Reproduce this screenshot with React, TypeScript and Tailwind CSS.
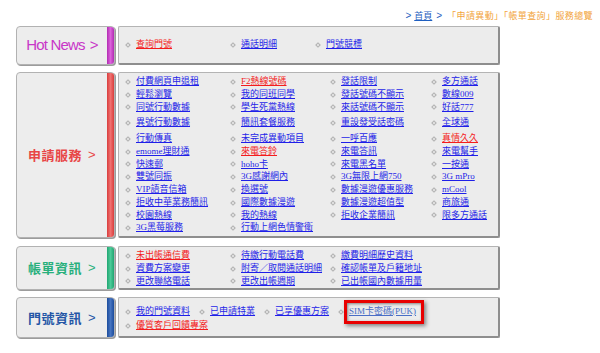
import React from "react";
import clsx from "clsx";

type Item = { text: string; red?: boolean };

const applyRows: Item[][] = [
  [{ text: "付費網頁申退租" }, { text: "F2熱線號碼", red: true }, { text: "發話限制" }, { text: "多方通話" }],
  [{ text: "輕鬆瀏覽" }, { text: "我的同班同學" }, { text: "發話號碼不顯示" }, { text: "數線009" }],
  [{ text: "同號行動數據" }, { text: "學生死黨熱線" }, { text: "來話號碼不顯示" }, { text: "好話777" }],
  [{ text: "異號行動數據" }, { text: "簡訊套餐服務" }, { text: "重設發受話密碼" }, { text: "全球通" }],
  [{ text: "行動傳真" }, { text: "未完成異動項目" }, { text: "一呼百應" }, { text: "真情久久", red: true }],
  [{ text: "emome理財通" }, { text: "來電答鈴", red: true }, { text: "來電答訊" }, { text: "來電幫手" }],
  [{ text: "快速郵" }, { text: "hoho卡" }, { text: "來電黑名單" }, { text: "一按通" }],
  [{ text: "雙號同振" }, { text: "3G感謝網內" }, { text: "3G無限上網750" }, { text: "3G mPro" }],
  [{ text: "VIP語音信箱" }, { text: "換選號" }, { text: "數據漫遊優惠服務" }, { text: "mCool" }],
  [{ text: "拒收中華業務簡訊" }, { text: "國際數據漫遊" }, { text: "數據漫遊超值型" }, { text: "商旅通" }],
  [{ text: "校園熱線" }, { text: "我的熱線" }, { text: "拒收企業簡訊" }, { text: "限多方通話" }],
  [{ text: "3G黑莓服務" }, { text: "行動上網色情警衛" }],
];

const billRows: Item[][] = [
  [{ text: "未出帳通信費", red: true }, { text: "待繳行動電話費" }, { text: "繳費明細歷史資料" }],
  [{ text: "資費方案變更" }, { text: "附寄／取閱通話明細" }, { text: "確認帳單及戶籍地址" }],
  [{ text: "更改聯絡電話" }, { text: "更改出帳週期" }, { text: "已出帳國內數據用量" }],
];

const Bullet = () => (
  <span className="mr-[6px] inline-block h-[4px] w-[4px] shrink-0 rotate-45 border border-[#b0b0b0] bg-[#e4e4e4]" />
);

const Cell = ({ item }: { item?: Item }) =>
  item ? (
    <div className="flex items-center whitespace-nowrap">
      <Bullet />
      <a
        href="#"
        className={clsx(
          "underline underline-offset-1",
          item.red ? "text-[#f41c1c]" : "text-[#1f1fe8]",
        )}
      >
        {item.text}
      </a>
    </div>
  ) : (
    <div />
  );

type SectionProps = {
  label: React.ReactNode;
  labelClass: string;
  barClass: string;
  heightClass: string;
  children: React.ReactNode;
};

const Section = ({ label, labelClass, barClass, heightClass, children }: SectionProps) => (
  <div className={clsx("flex gap-[3px] pl-[16px]", heightClass)}>
    <div className="flex w-[99px] overflow-hidden rounded-[4px] border border-[#b2b2b2] bg-[#ededed] shadow-[1px_1px_0_#9c9c9c]">
      <div className={clsx("flex flex-1 items-center justify-center whitespace-nowrap", labelClass)}>
        {label}
      </div>
      <div className={clsx("w-[7px]", barClass)} />
    </div>
    <div className="w-[382px] rounded-[2px] border border-[#b4b4b4] border-r-2 border-b-2 border-r-[#8e8e8e] border-b-[#8e8e8e] bg-[#ececec] font-['Liberation_Serif','Noto_Sans_CJK_TC',serif] text-[9px]">
      {children}
    </div>
  </div>
);

const Chevron = () => <span className="ml-[6px] font-['Liberation_Sans',sans-serif] font-normal">&gt;</span>;

export default function App() {
  return (
    <div className="h-[353px] w-[600px] bg-white">
      <div className="flex h-[26px] justify-end pr-[7px] pt-[10px] font-['Noto_Sans_CJK_TC',sans-serif] text-[9px] leading-[12px]">
        <span className="mr-[3px] font-['Liberation_Sans',sans-serif] text-[10px] text-[#1f5fc0]">&gt;</span>
        <a href="#" className="text-[#1f5fc0] underline">首頁</a>
        <span className="ml-[4px] mr-[5px] font-['Liberation_Sans',sans-serif] text-[10px] text-[#1f5fc0]">&gt;</span>
        <span className="tracking-[0.4px] text-[#f2a43a]">「申請異動」「帳單查詢」服務總覽</span>
      </div>

      <Section
        label={
          <>
            Hot News<span className="ml-[5px] font-light">&gt;</span>
          </>
        }
        labelClass="font-['Liberation_Sans',sans-serif] text-[15px] tracking-[-0.8px] text-[#c836c8]"
        barClass="bg-linear-to-r from-[#b22ab2] via-[#dc62dc] to-[#b22ab2]"
        heightClass="h-[39px]"
      >
        <div className="grid h-full grid-cols-[105px_85px_1fr] items-center pl-[7px]">
          <Cell item={{ text: "查詢門號", red: true }} />
          <Cell item={{ text: "通話明細" }} />
          <Cell item={{ text: "門號競標" }} />
        </div>
      </Section>

      <div className="mt-[7px]">
        <Section
          label={
            <>
              申請服務<Chevron />
            </>
          }
          labelClass="font-['Noto_Sans_CJK_TC',sans-serif] text-[13px] font-bold tracking-[0.5px] text-[#e84646]"
          barClass="bg-linear-to-r from-[#d83c3c] via-[#f07070] to-[#d83c3c]"
          heightClass="h-[166px]"
        >
          <div className="pl-[7px] pt-[2px]">
            {applyRows.map((row, i) => (
              <div
                key={i}
                className={clsx(
                  "grid h-[12.75px] grid-cols-[105px_100px_101px_1fr] items-center",
                  (i === 3 || i === 4) && "mt-[3px]",
                )}
              >
                {row.map((item) => (
                  <Cell key={item.text} item={item} />
                ))}
              </div>
            ))}
          </div>
        </Section>
      </div>

      <div className="mt-[8px]">
        <Section
          label={
            <>
              帳單資訊<Chevron />
            </>
          }
          labelClass="font-['Noto_Sans_CJK_TC',sans-serif] text-[13px] font-bold tracking-[0.5px] text-[#28b07c]"
          barClass="bg-linear-to-r from-[#1ea672] via-[#4cca98] to-[#1ea672]"
          heightClass="h-[44px]"
        >
          <div className="pl-[7px] pt-[2px]">
            {billRows.map((row, i) => (
              <div key={i} className="grid h-[12.75px] grid-cols-[105px_100px_1fr] items-center">
                {row.map((item) => (
                  <Cell key={item.text} item={item} />
                ))}
              </div>
            ))}
          </div>
        </Section>
      </div>

      <div className="mt-[7px]">
        <Section
          label={
            <>
              門號資訊<Chevron />
            </>
          }
          labelClass="font-['Noto_Sans_CJK_TC',sans-serif] text-[13px] font-bold tracking-[0.5px] text-[#2456a6]"
          barClass="bg-linear-to-r from-[#1c4c9c] via-[#4674c0] to-[#1c4c9c]"
          heightClass="h-[41px]"
        >
          <div className="pl-[7px] pt-[7px]">
            <div className="flex h-[14px] items-center gap-[10px]">
              <Cell item={{ text: "我的門號資料" }} />
              <Cell item={{ text: "已申請特業" }} />
              <Cell item={{ text: "已享優惠方案" }} />
              <div className="flex items-center whitespace-nowrap">
                <Bullet />
                <span className="relative">
                  <a href="#" className="text-[#4a6ec6] underline underline-offset-1">
                    SIM卡密碼(PUK)
                  </a>
                  <span className="pointer-events-none absolute -bottom-[5px] -left-[5px] -right-[8px] -top-[5px] border-[3px] border-[#e80000] shadow-[2px_2px_4px_rgba(0,0,0,0.45),inset_1px_1px_3px_rgba(0,0,0,0.45)]" />
                </span>
              </div>
            </div>
            <div className="flex h-[14px] items-center">
              <Cell item={{ text: "優質客戶回饋專案", red: true }} />
            </div>
          </div>
        </Section>
      </div>
    </div>
  );
}
